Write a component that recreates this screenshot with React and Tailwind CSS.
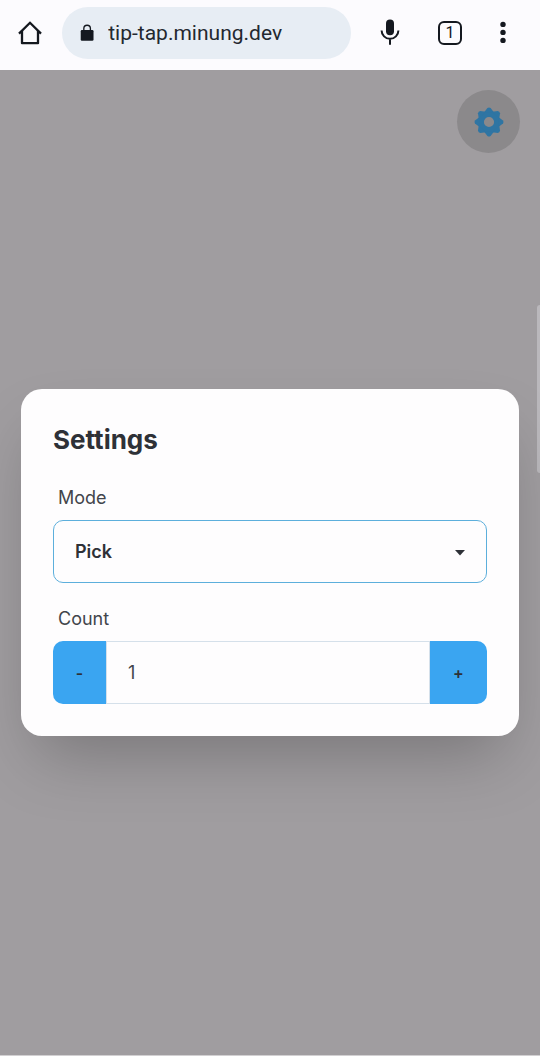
import { useState } from "react";

function HomeIcon() {
  return (
    <svg viewBox="0 0 28 28" className="size-7" fill="none" stroke="#14181f" strokeWidth="2.3" strokeLinejoin="round" aria-hidden="true">
      <path d="M3 14.6 14 3.8l11 10.8" strokeLinejoin="miter" />
      <path d="M6 12V24.2h16V12" />
    </svg>
  );
}

function LockIcon() {
  return (
    <svg viewBox="0 0 16 20" className="h-5 w-4" aria-hidden="true">
      <path d="M4.3 8V5a3.7 3.7 0 0 1 7.4 0V8" fill="none" stroke="#14181f" strokeWidth="1.5" />
      <rect x="0.8" y="6.6" width="14.4" height="12" rx="1.4" fill="#14181f" />
    </svg>
  );
}

function MicIcon() {
  return (
    <svg viewBox="0 0 28 28" className="size-7" aria-hidden="true">
      <rect x="10" y="0.4" width="8" height="15.8" rx="4" fill="#14181f" />
      <path d="M5.6 11.4a8.4 8.4 0 0 0 16.8 0M14 19.8v6" fill="none" stroke="#14181f" strokeWidth="2" />
    </svg>
  );
}

function DotsIcon() {
  return (
    <svg viewBox="0 0 8 24" className="h-6 w-2" fill="#14181f" aria-hidden="true">
      <circle cx="4" cy="3.4" r="2.7" />
      <circle cx="4" cy="11.4" r="2.7" />
      <circle cx="4" cy="19.4" r="2.7" />
    </svg>
  );
}

const TEETH = [0, 45, 90, 135, 180, 225, 270, 315];

function GearIcon() {
  return (
    <svg viewBox="-16 -16 32 32" className="size-8" aria-hidden="true">
      <circle r="8" fill="none" stroke="#2f75a3" strokeWidth="5.8" />
      {TEETH.map((angle) => (
        <path key={angle} d="M-5 -9.4-1.6-14Q0-15 1.6-14L5-9.4Z" fill="#2f75a3" transform={`rotate(${angle})`} />
      ))}
    </svg>
  );
}

export default function App() {
  const [count, setCount] = useState(1);

  return (
    <div className="flex min-h-screen flex-col bg-[#a09da0] font-['Inter',sans-serif] text-[#2e3137]">
      <header className="flex h-[70px] items-center bg-[#fcfbfe] pr-3.5 pb-1 pl-4">
        <button type="button" aria-label="Home" className="mr-[18px]">
          <HomeIcon />
        </button>
        <div className="flex h-[52px] min-w-0 flex-1 items-center gap-3.5 rounded-full bg-[#e7edf4] pl-[18px]">
          <LockIcon />
          <input
            type="text"
            aria-label="Address"
            defaultValue="tip-tap.minung.dev"
            className="h-8 w-full min-w-0 bg-transparent pr-4 font-['Roboto',sans-serif] text-[21px] text-[#23282f] outline-none"
          />
        </div>
        <button type="button" aria-label="Voice search" className="ml-[9px] flex w-[60px] justify-center">
          <MicIcon />
        </button>
        <button type="button" aria-label="Tabs" className="flex w-[60px] justify-center">
          <span className="flex size-6 items-center justify-center rounded-md border-2 border-[#14181f] font-['Roboto',sans-serif] text-base leading-5 text-[#14181f]">
            1
          </span>
        </button>
        <button type="button" aria-label="More" className="flex w-[46px] justify-center">
          <DotsIcon />
        </button>
      </header>

      <main className="relative flex flex-1 flex-col border-b border-[#d2d0d2]">
        <div className="absolute inset-x-0 top-0 flex justify-end p-5">
          <button type="button" aria-label="Settings" className="flex size-[63px] items-center justify-center rounded-full bg-[#8b898b]">
            <GearIcon />
          </button>
        </div>
        <div className="absolute top-[235px] right-0 h-[168px] w-[3px] rounded-l-sm bg-[#bab8bc]" />

        <section
          role="dialog"
          aria-labelledby="settings-title"
          className="relative mx-[21px] my-auto rounded-[21px] bg-[#fefdfe] px-8 pt-[33px] pb-8 shadow-[0_33px_66px_-16px_rgba(0,0,0,0.25)]"
        >
          <h1 id="settings-title" className="text-[26px] leading-9 font-bold">Settings</h1>

          <label htmlFor="mode" className="mt-7 mb-2.5 block pl-[5px] text-lg leading-6 text-[#42454b]">Mode</label>
          <div className="relative">
            <select
              id="mode"
              className="h-[63px] w-full appearance-none rounded-[10px] border border-[#5dafdc] bg-transparent pl-[21px] text-lg font-semibold outline-none"
            >
              <option>Pick</option>
              <option>Team</option>
              <option>Order</option>
            </select>
            <svg viewBox="0 0 10 6" className="pointer-events-none absolute top-[30px] right-[22px] h-1.5 w-2.5" fill="#2e3137" aria-hidden="true">
              <path d="M0 0h10L5 5.6z" />
            </svg>
          </div>

          <label htmlFor="count" className="mt-6 mb-2.5 block pl-[5px] text-lg leading-6 text-[#42454b]">Count</label>
          <div className="flex h-[63px] overflow-hidden rounded-[10px]">
            <button type="button" aria-label="Decrease" onClick={() => setCount(Math.max(1, count - 1))} className="w-[53px] bg-[#3aa5f1] text-base font-semibold">
              -
            </button>
            <input
              id="count"
              type="text"
              inputMode="numeric"
              value={count}
              onChange={(event) => setCount(Number(event.target.value) || 1)}
              className="min-w-0 flex-1 border border-[#d5e0ea] bg-transparent pl-[21px] text-lg text-[#42454b] outline-none"
            />
            <button type="button" aria-label="Increase" onClick={() => setCount(count + 1)} className="w-[57px] bg-[#3aa5f1] text-base font-semibold">
              +
            </button>
          </div>
        </section>
      </main>
    </div>
  );
}
